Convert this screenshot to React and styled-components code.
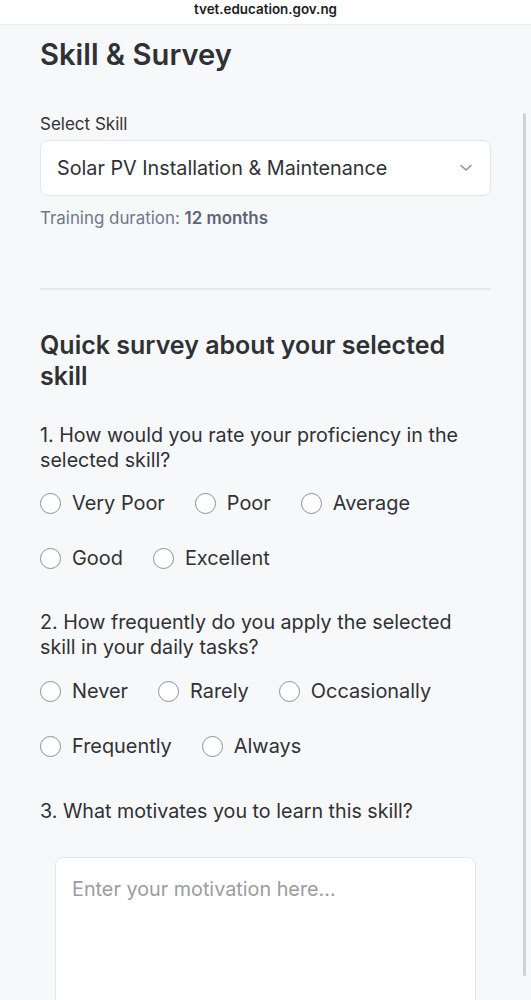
import React from "react";
import styled, { createGlobalStyle } from "styled-components";

const GlobalStyle = createGlobalStyle`
  html, body {
    margin: 0;
    padding: 0;
    background: #f7f8fa;
    font-family: Inter, "Noto Sans", sans-serif;
    color: #303236;
    -webkit-font-smoothing: antialiased;
  }
  * { box-sizing: border-box; }
`;

const AddressBar = styled.div`
  height: 25px;
  padding-bottom: 6px;
  background: #ffffff;
  border-bottom: 1px solid #e9ebee;
  display: flex;
  align-items: center;
  justify-content: center;
  font-size: 13.4px;
  font-weight: 600;
  color: #1c1c1e;
`;

const Page = styled.main`
  padding: 12px 40px 0 40px;
  display: flex;
  flex-direction: column;
`;

const Title = styled.h1`
  margin: 0;
  font-size: 29.2px;
  line-height: 36px;
  font-weight: 600;
  color: #2f3135;
`;

const Label = styled.label`
  margin-top: 40px;
  font-size: 17px;
  line-height: 22px;
  color: #303236;
`;

const SelectBox = styled.div`
  margin-top: 5px;
  height: 56px;
  background: #fff;
  border: 1px solid #e4e6ea;
  border-radius: 8px;
  display: flex;
  align-items: center;
  justify-content: space-between;
  padding: 0 18px 0 16px;
  font-size: 19.8px;
  color: #2f3135;
`;

const Hint = styled.p`
  margin: 11px 0 0;
  font-size: 16.9px;
  line-height: 22px;
  color: #6f7888;
  b { font-weight: 600; color: #5d6676; }
`;

const Divider = styled.hr`
  margin: 59px 0 0;
  border: none;
  height: 2px;
  background: #e6e8eb;
`;

const SurveyTitle = styled.h2`
  margin: 40px 0 0;
  font-size: 25px;
  line-height: 31px;
  font-weight: 600;
  color: #2f3135;
`;

const Question = styled.p`
  margin: ${(p) => p.$gap || 33}px 0 0;
  font-size: 19.7px;
  line-height: 25px;
  color: #2f3135;
`;

const Options = styled.div`
  display: flex;
  flex-wrap: wrap;
  column-gap: 30px;
  row-gap: 33px;
  margin-top: ${(p) => p.$top || 19}px;
`;

const Option = styled.label`
  display: flex;
  align-items: center;
  gap: 11px;
  height: 22px;
  font-size: 19.9px;
  color: #303236;
`;

const Circle = styled.span`
  width: 21px;
  height: 21px;
  border-radius: 50%;
  border: 1.6px solid #8d8f93;
  background: #fff;
`;

const TextArea = styled.div`
  margin: 33px 15px 0;
  height: 180px;
  background: #fff;
  border: 1px solid #e4e6ea;
  border-radius: 8px;
  padding: 19px 16px;
  font-size: 19.8px;
  color: #9a9ca0;
`;

const ScrollThumb = styled.div`
  position: fixed;
  right: 5px;
  top: 113px;
  width: 3px;
  height: 863px;
  border-radius: 2px;
  background: #cfd1d4;
`;

const Chevron = () => (
  <svg width="12" height="8" viewBox="0 0 12 8" fill="none">
    <path d="M1 1.5l5 4.5 5-4.5" stroke="#8a8d92" strokeWidth="1.4" strokeLinecap="round" strokeLinejoin="round" />
  </svg>
);

const q1 = ["Very Poor", "Poor", "Average", "Good", "Excellent"];
const q2 = ["Never", "Rarely", "Occasionally", "Frequently", "Always"];

function Radios({ items, top }) {
  return (
    <Options $top={top}>
      {items.map((t) => (
        <Option key={t}>
          <Circle />
          {t}
        </Option>
      ))}
    </Options>
  );
}

export default function App() {
  return (
    <>
      <GlobalStyle />
      <AddressBar>tvet.education.gov.ng</AddressBar>
      <Page>
        <Title>Skill &amp; Survey</Title>
        <Label>Select Skill</Label>
        <SelectBox>
          <span>Solar PV Installation &amp; Maintenance</span>
          <Chevron />
        </SelectBox>
        <Hint>
          Training duration: <b>12 months</b>
        </Hint>
        <Divider />
        <SurveyTitle>Quick survey about your selected skill</SurveyTitle>
        <Question $gap={31}>1. How would you rate your proficiency in the selected skill?</Question>
        <Radios items={q1} />
        <Question $gap={41}>2. How frequently do you apply the selected skill in your daily tasks?</Question>
        <Radios items={q2} top={20} />
        <Question $gap={42}>3. What motivates you to learn this skill?</Question>
        <TextArea>Enter your motivation here...</TextArea>
      </Page>
      <ScrollThumb />
    </>
  );
}
